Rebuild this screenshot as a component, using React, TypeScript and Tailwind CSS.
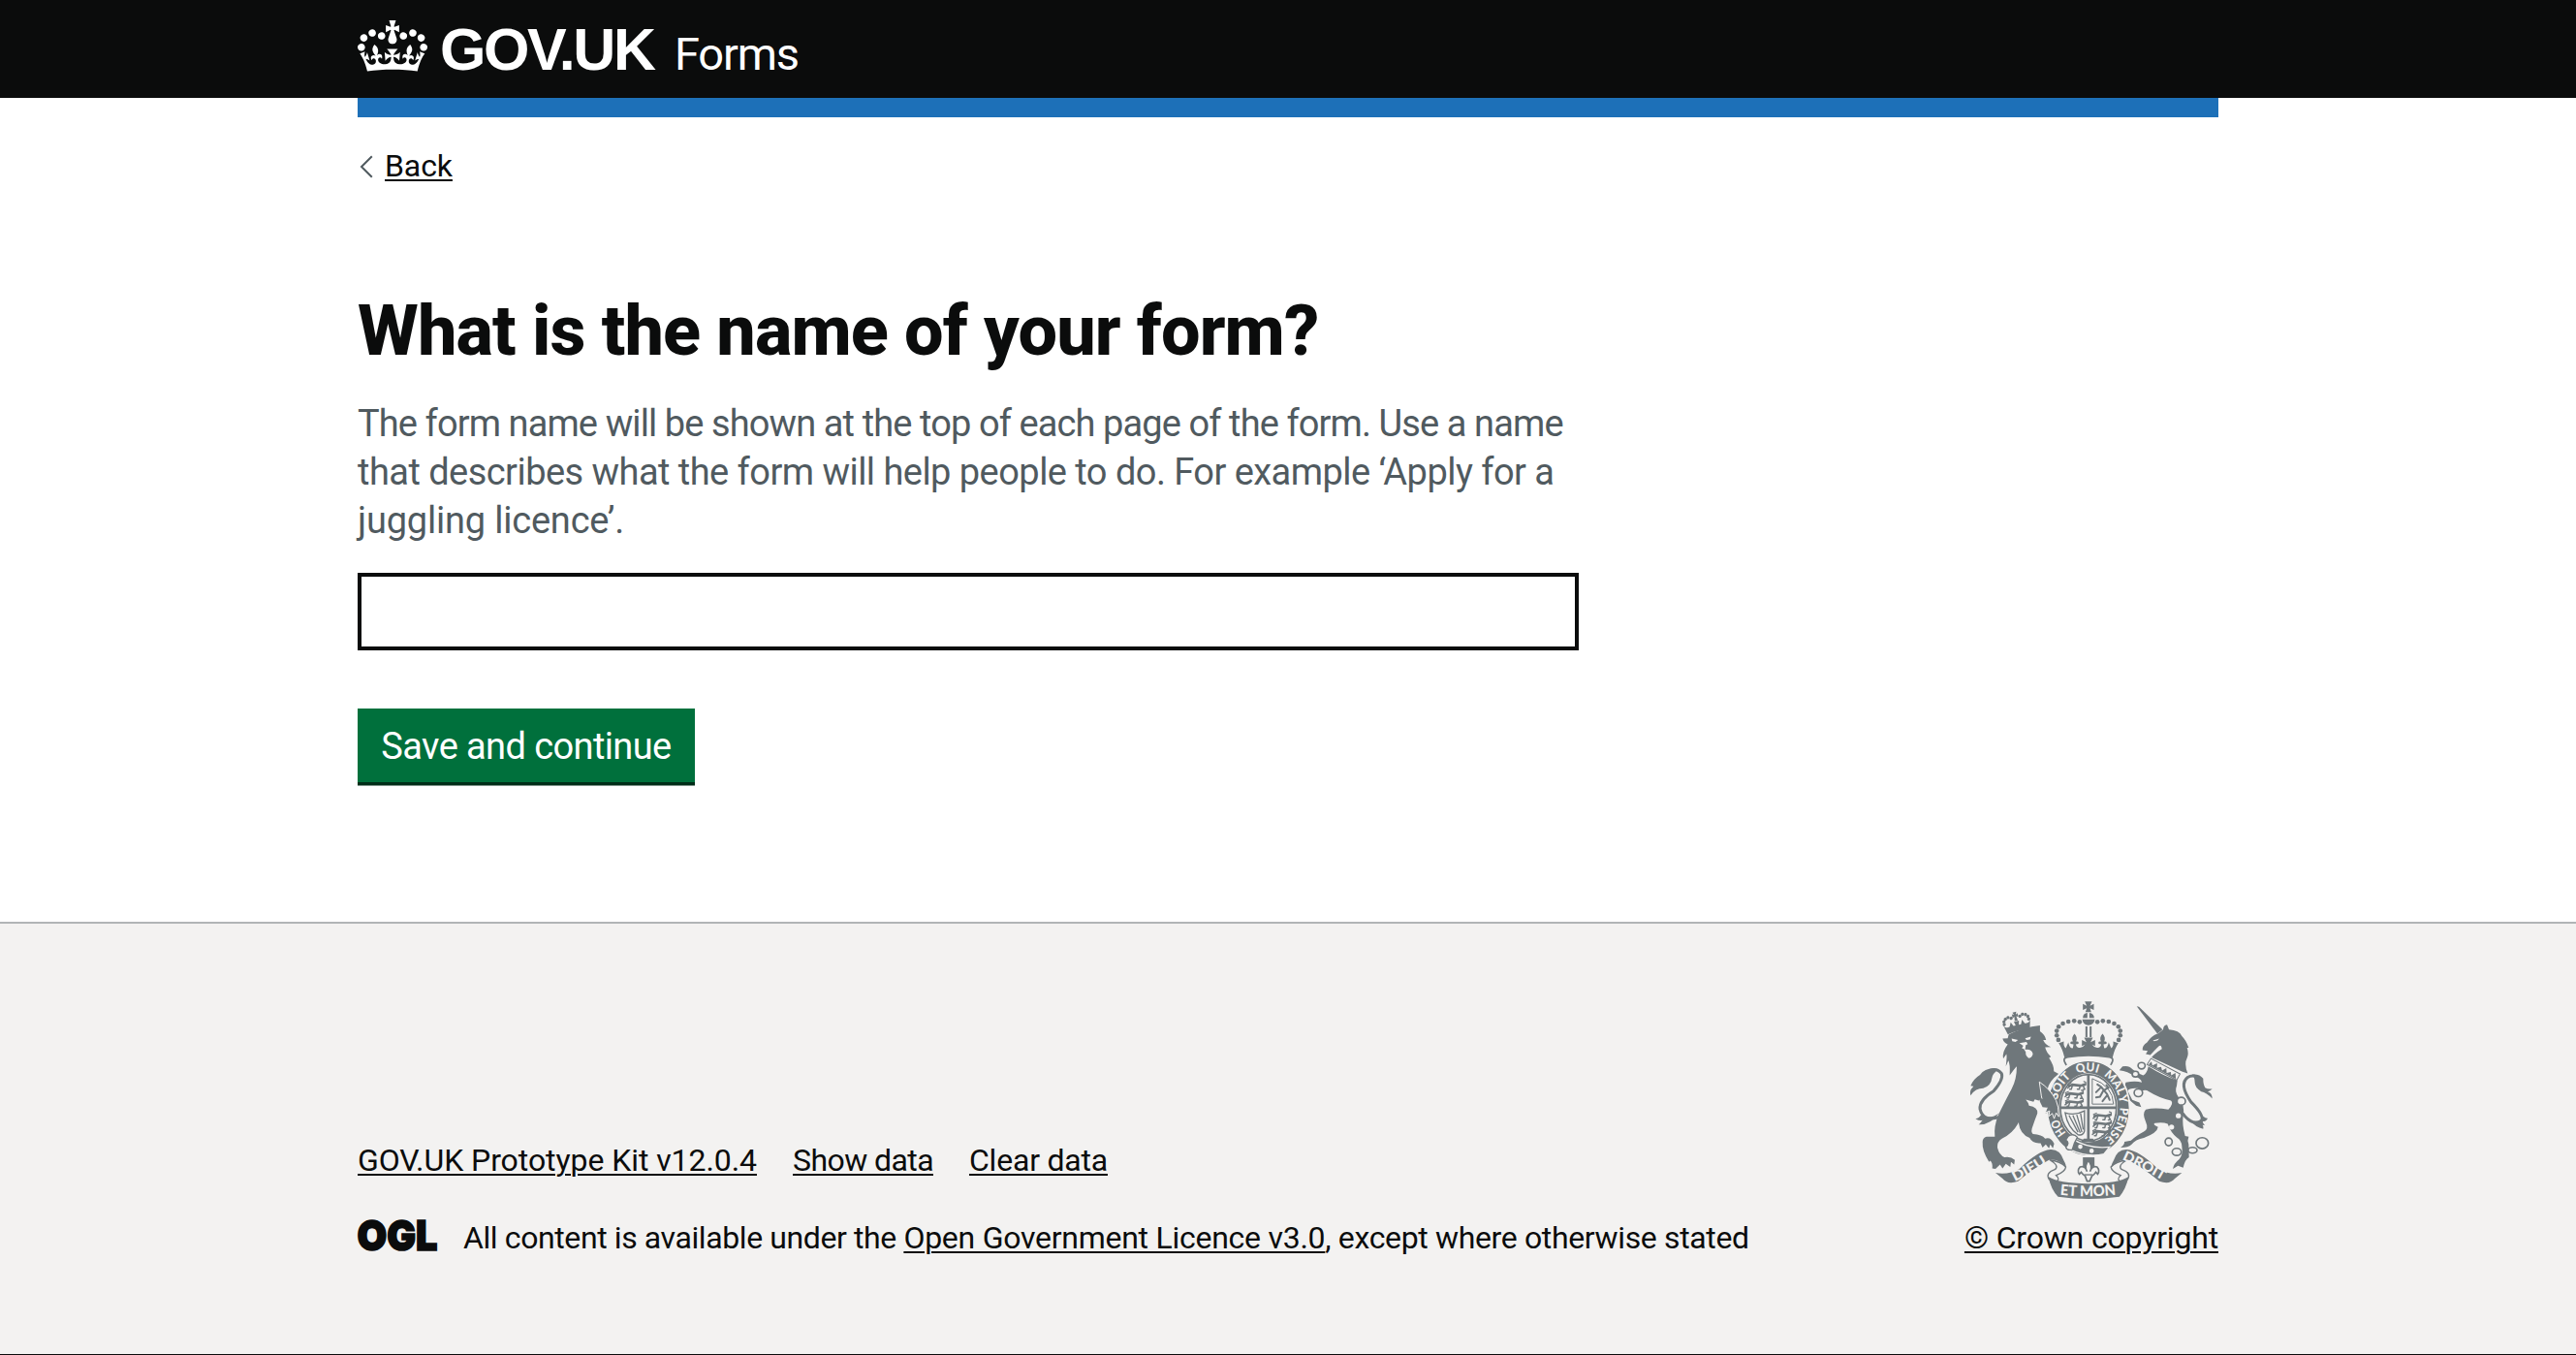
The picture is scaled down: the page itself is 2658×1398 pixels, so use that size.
import React from "react";

const PEARLS: [number, number][] = [
  [407, 102], [390, 99], [372, 101], [355, 107], [342, 117], [336, 130], [336, 144], [341, 158],
];

const CHAIN: [number, number, number, number][] = [
  [599, 238, 9, 10], [580, 264, 8, 9], [589, 322, 11, 12], [722, 348, 11, 12],
  [683, 474, 9, 12], [708, 505, 12, 11], [757, 500, 12, 9], [787, 478, 17, 17],
];

function CrownLogo() {
  return (
    <svg viewBox="0 0 132 97" className="h-[53px] w-[72px]" fill="currentColor" aria-hidden="true">
      <path
        fillRule="evenodd"
        d="M25 30.2c3.5 1.5 7.7-.2 9.1-3.7 1.5-3.6-.2-7.8-3.9-9.2-3.6-1.4-7.6.3-9.1 3.9-1.4 3.5.3 7.5 3.9 9zM9 39.5c3.6 1.5 7.8-.2 9.2-3.7 1.5-3.6-.2-7.8-3.9-9.1-3.6-1.5-7.6.2-9.1 3.8-1.4 3.5.3 7.5 3.8 9zM4.4 57.2c3.5 1.5 7.7-.2 9.1-3.8 1.5-3.6-.2-7.7-3.9-9.1-3.5-1.5-7.6.3-9.1 3.8-1.4 3.5.3 7.6 3.9 9.1zm38.3-21.4c3.5 1.5 7.7-.2 9.1-3.8 1.5-3.6-.2-7.7-3.9-9.1-3.6-1.5-7.6.3-9.1 3.8-1.3 3.6.4 7.7 3.9 9.1zm64.4-5.6c-3.6 1.5-7.8-.2-9.1-3.7-1.5-3.6.2-7.8 3.8-9.2 3.6-1.4 7.7.3 9.2 3.9 1.3 3.5-.4 7.5-3.9 9zm15.9 9.3c-3.6 1.5-7.7-.2-9.1-3.7-1.5-3.6.2-7.8 3.7-9.1 3.6-1.5 7.7.2 9.2 3.8 1.5 3.5-.3 7.5-3.8 9zm4.7 17.7c-3.6 1.5-7.8-.2-9.2-3.8-1.5-3.6.2-7.7 3.9-9.1 3.6-1.5 7.7.3 9.2 3.8 1.3 3.5-.4 7.6-3.9 9.1zM89.3 35.8c-3.6 1.5-7.8-.2-9.2-3.8-1.4-3.6.2-7.7 3.9-9.1 3.6-1.5 7.7.3 9.2 3.8 1.4 3.6-.3 7.7-3.9 9.1zM69.7 17.7l8.9 4.7V9.3l-8.9 2.8c-.2-.3-.5-.6-.9-.9L72.4 0H59.6l3.5 11.2c-.3.3-.6.5-.9.9l-8.8-2.8v13.1l8.8-4.7c.3.3.6.7.9.9l-5 15.4v.1c-.2.8-.4 1.6-.4 2.4 0 4.1 3.1 7.5 7 8.1h.2c.3 0 .7.1 1 .1.4 0 .7 0 1-.1h.2c4-.6 7.1-4.1 7.1-8.1 0-.8-.1-1.7-.4-2.4V34l-5.1-15.4c.4-.2.7-.6 1-.9zM66 92.8c16.9 0 32.8 1.1 47.1 3.2 4-16.9 8.9-26.7 14-33.5l-9.6-3.4c1 4.9 1.1 7.2 0 10.2-1.5-1.4-3-4.3-4.2-8.7L108.6 76c2.8-2 5-3.2 7.5-3.3-4.4 9.4-10 11.9-13.6 11.2-4.3-.8-6.3-4.6-5.6-7.9 1-4.7 5.7-5.9 8-.5 4.3-8.7-3-11.4-7.6-8.8 7.1-7.2 7.9-13.5 2.1-21.1-8 6.1-8.1 12.3-4.5 20.8-4.7-5.4-12.1-2.5-9.5 6.2 3.4-5.2 7.9-2 7.2 3.1-.6 4.3-6.4 7.8-13.5 7.2-10.3-.9-10.9-8-11.2-13.8 2.5-.5 7.1 1.8 11 7.3L80.2 60c-4.1 4.4-8 5.3-12.3 5.4 1.4-4.4 8-11.6 8-11.6H55.5s6.4 7.2 7.9 11.6c-4.2-.1-8-1-12.3-5.4l1.4 16.4c3.9-5.5 8.5-7.7 10.9-7.3-.3 5.8-.9 12.8-11.1 13.8-7.2.6-12.9-2.9-13.5-7.2-.7-5 3.8-8.3 7.1-3.1 2.7-8.7-4.6-11.6-9.4-6.2 3.7-8.5 3.6-14.7-4.6-20.8-5.8 7.6-5 13.9 2.2 21.1-4.7-2.6-11.9.1-7.7 8.8 2.3-5.5 7.1-4.2 8.1.5.7 3.3-1.3 7.1-5.7 7.9-3.5.7-9-1.8-13.5-11.2 2.5.1 4.7 1.3 7.5 3.3l-4.7-15.4c-1.2 4.4-2.7 7.2-4.3 8.7-1.1-3-.9-5.3 0-10.2l-9.5 3.4c5 6.9 9.9 16.7 14 33.5 14.8-2.1 30.8-3.2 47.7-3.2z"
      />
    </svg>
  );
}

/** A small walking lion, used in the quarters of the shield. */
function PassantLion({ x, y }: { x: number; y: number }) {
  return (
    <g transform={`translate(${x} ${y})`} fill="none" stroke="#6f777b" strokeWidth="4.5" strokeLinecap="round" strokeLinejoin="round">
      <path d="M6 8 L16 5 L42 8 L56 4" strokeWidth="8" />
      <path d="M8 10 L2 15 M16 9 L13 19 L8 19 M40 10 L38 19 L32 19 M50 9 L55 19 L49 20" />
      <path d="M56 3 Q62 -4 52 -5 M3 3 L12 -1" strokeWidth="3.5" />
    </g>
  );
}

function Crest() {
  return (
    <svg viewBox="68.5 38 750 613" className="h-[204px] w-[250px]" aria-hidden="true">
      <defs>
        <path id="garter" d="M434 479 A98 114 0 0 1 336 368 A98 113 0 0 1 532 368 A98 114 0 0 1 434 479" />
        <path id="dieu" d="M206 597 Q266 568 322 528" />
        <path id="droit" d="M538 528 Q605 558 670 597" />
        <path id="etmon" d="M346 638 Q434 648 524 637" />
      </defs>

      <g fill="#6f777b">
        {/* Royal crown */}
        <path d="M423 39 H445 L439 52 L451 46 V65 L439 60 L443 72 H425 L429 60 L417 65 V46 L429 52Z" />
        <path d="M417 90 Q417 75 431 74 V90Z M437 74 Q452 76 452 90 H437Z M415 94 H454 Q452 111 434 112 Q417 111 415 94Z" />
        <path d="M425 116 H431 V149 H425Z M438 116 H444 V149 H438Z" />
        {PEARLS.map(([x, y]) => (
          <React.Fragment key={`${x}-${y}`}>
            <circle cx={x} cy={y} r="7" />
            <circle cx={869 - x} cy={y} r="7" />
          </React.Fragment>
        ))}
        <path d="M342 168 L358 163 Q356 178 364 184 L372 166 Q376 186 386 183 L388 172 L379 170 Q376 161 386 163 Q380 151 391 139 Q402 151 396 163 Q406 161 403 170 L395 172 Q398 184 408 182 Q420 180 424 172 L414 177 V158 L428 165 L421 151 H448 L441 165 L455 158 V177 L445 172 Q449 180 461 182 Q471 184 474 172 L466 170 Q463 161 473 163 Q467 151 478 139 Q489 151 483 163 Q493 161 490 170 L481 172 L483 183 Q493 186 497 166 L505 184 Q513 178 511 163 L527 168 Q516 184 509 212 Q434 200 360 212 Q353 184 342 168Z" />
      </g>
      <path d="M366 236 Q350 214 370 211 Q434 201 499 211 Q518 214 503 236" fill="#f3f2f1" stroke="#6f777b" strokeWidth="5" />

      {/* Tails */}
      <g fill="none" stroke="#6f777b" strokeWidth="9">
        <path d="M170 392 Q108 418 98 372 Q96 344 140 317 Q172 280 165 262 Q152 244 130 252" />
        <path d="M716 370 Q752 430 785 408 Q794 392 752 350 Q714 295 742 274 Q752 267 765 270" />
      </g>
      <g fill="#6f777b">
        <path d="M140 246 Q112 246 98 266 Q78 278 69 300 L78 302 Q64 315 69 330 Q84 308 108 308 Q132 300 135 276 Q138 262 148 256Z" />
        <path d="M101 390 Q96 400 84 402 Q96 410 106 407 Q98 418 94 420 Q130 422 158 384 Q130 406 101 390Z" />
        <path d="M756 265 Q778 262 790 278 Q790 298 796 306 Q806 312 818 309 Q812 318 804 318 Q818 322 818 340 Q800 320 784 318 Q764 306 764 290 Q764 274 756 265Z" />
        <path d="M790 395 Q798 402 804 401 Q800 412 788 410 Q790 420 795 423 L788 422 Q792 428 790 434 Q766 428 750 408 Q772 422 790 395Z" />
      </g>

      {/* Lion */}
      <path
        fill="#6f777b"
        d="M168 154 L184 153 L187 141 Q232 118 284 113 L284 131 Q300 142 303 158 L294 158 Q300 174 318 180 L300 181 Q304 198 318 210 L312 214 Q328 238 327 255 L342 263 Q312 285 307 312 L330 346 Q342 366 340 392 L334 382 L330 400 L323 386 L312 395 L315 380 L301 386 L308 370 L297 362 L304 350 L294 352 L290 338 L280 346 L268 342 L264 350 L240 343 Q248 352 250 362 Q278 366 276 386 Q268 406 262 424 Q254 442 262 450 Q290 452 300 464 Q318 458 328 480 L324 494 L316 482 L312 494 L302 482 L292 492 L286 478 Q260 480 252 462 Q222 450 218 416 Q220 410 214 420 Q200 446 166 464 Q150 474 152 492 Q158 516 174 522 Q192 518 206 530 L204 544 L194 536 L192 552 L178 542 L168 556 L160 544 L146 558 L136 556 Q138 540 130 532 L126 536 Q104 502 106 474 Q106 462 118 458 L144 458 Q140 426 156 388 Q180 340 196 310 Q212 280 212 240 Q204 248 190 268 Q192 232 186 222 L178 240 Q182 212 180 202 L170 216 Q166 196 184 172 Q172 168 168 154Z"
      />
      <path d="M196 154 L216 158 L208 164 L198 162Z M238 153 L256 148 L253 157 L242 158Z M220 168 L242 164 L246 171 L240 174 L238 188 Q260 186 262 202 Q258 216 248 214 Q238 206 240 196 L234 186 L228 184 L232 176Z" fill="#f3f2f1" />
      {/* Lion's small crown */}
      <g fill="#6f777b" transform="rotate(-13 212 105)">
        <path d="M170 107 Q178 116 188 112 L194 99 L200 112 L207 112 L204 100 H220 L217 112 L224 112 L230 99 L236 112 Q246 116 254 107 L247 134 Q212 126 177 134Z" />
        <path d="M206 71 H218 L215 79 L221 76 V88 L215 85 L217 98 H207 L209 85 L203 88 V76 L209 79Z" />
        {[[173, 102], [174, 93], [180, 86], [189, 83], [198, 87], [251, 102], [250, 93], [244, 86], [235, 83], [226, 87]].map(([x, y]) => (
          <circle key={x * 1000 + y} cx={x} cy={y} r="5" />
        ))}
      </g>

      {/* Unicorn */}
      <g fill="#6f777b">
        <path d="M584 54 L591 55 L664 126 L648 139Z" />
        <path d="M650 138 L666 126 Q666 112 678 111 L684 126 Q716 128 724 146 Q738 160 745 182 L740 182 Q746 200 740 214 Q730 232 742 262 L724 256 L630 212 Q640 200 662 186 Q660 170 652 178 Q640 190 626 205 L612 202 L618 192 L602 190 Q600 176 616 166 Q628 146 650 138Z" />
        <path d="M620 240 Q664 268 710 284 L708 300 Q700 318 714 336 Q734 360 728 392 Q724 420 734 456 L745 458 Q740 470 745 482 L746 522 Q734 528 728 554 L712 548 L696 558 Q698 542 716 528 Q728 514 724 488 Q724 470 708 460 Q690 446 680 418 Q664 412 640 416 Q632 420 650 428 Q648 446 606 462 Q582 466 568 482 Q558 492 534 492 Q546 484 546 474 L566 470 Q580 456 606 442 Q622 434 612 412 Q600 386 612 374 Q640 366 682 374 Q700 354 690 346 Q650 336 622 318 Q608 310 600 318 L588 308 Q560 306 556 316 L570 344 L592 352 L598 366 L582 362 L566 348 Q548 330 544 308 L550 290 Q580 284 600 290 Q596 276 578 272 Q556 254 530 252 L540 240 Q560 236 570 248 Q586 262 604 268 Q616 262 620 240Z" />
      </g>
      <path d="M634 160 L654 154 L648 160 L638 162Z" fill="#f3f2f1" />
      <g transform="translate(630 212) rotate(28)">
        <path d="M0 4 H102 V26 H-2Z" fill="#f3f2f1" stroke="#6f777b" strokeWidth="3" />
        <path d="M2 24 L6 12 L14 21 L24 8 L30 21 L40 12 L48 21 L56 8 L64 21 L74 12 L80 21 L88 8 L98 24Z" fill="#6f777b" />
      </g>
      {CHAIN.map(([x, y, rx, ry]) => (
        <ellipse key={x} cx={x} cy={y} rx={rx + 2} ry={ry} fill={x < 680 || x === 722 ? "#f3f2f1" : "none"} stroke="#6f777b" strokeWidth="5" />
      ))}
      <circle cx="713" cy="393" r="8" fill="#f3f2f1" />
      <circle cx="692" cy="428" r="8" fill="#f3f2f1" />

      {/* Garter */}
      <ellipse cx="434" cy="370" rx="128" ry="148" fill="#6f777b" stroke="#f3f2f1" strokeWidth="5" />
      <ellipse cx="434" cy="368" rx="91" ry="107" fill="#f3f2f1" />
      <ellipse cx="434" cy="368" rx="87" ry="103" fill="none" stroke="#6f777b" strokeWidth="5" />
      <path d="M434 264 V471 M346 368 H522" stroke="#6f777b" strokeWidth="8" />
      <g fontFamily="Lato, Liberation Sans, sans-serif" fontWeight="900" fontSize="37" fill="#f3f2f1">
        <text><textPath href="#garter" startOffset="12%" textLength="50" lengthAdjust="spacingAndGlyphs">HO</textPath></text>
        <text><textPath href="#garter" startOffset="28.5%" textLength="84" lengthAdjust="spacingAndGlyphs">SOIT</textPath></text>
        <text><textPath href="#garter" startOffset="44.5%" textLength="66" lengthAdjust="spacingAndGlyphs">QUI</textPath></text>
        <text><textPath href="#garter" startOffset="57.5%" textLength="78" lengthAdjust="spacingAndGlyphs">MAL</textPath></text>
        <text><textPath href="#garter" startOffset="69.5%">Y</textPath></text>
        <text><textPath href="#garter" startOffset="75%" textLength="112" lengthAdjust="spacingAndGlyphs">PENSE</textPath></text>
      </g>

      {/* Shield quarters */}
      <PassantLion x={368} y={292} />
      <PassantLion x={360} y={319} />
      <PassantLion x={360} y={344} />
      <PassantLion x={447} y={386} />
      <PassantLion x={447} y={411} />
      <PassantLion x={445} y={436} />
      <path d="M446 278 V357 H512 Q510 300 446 278" fill="none" stroke="#6f777b" strokeWidth="3" />
      <path d="M462 296 L474 304 L492 326 L500 344 M470 308 L458 320 M480 316 L470 334 L458 336 M492 330 L478 348 M486 312 L496 306 L490 298" fill="none" stroke="#6f777b" strokeWidth="6" strokeLinecap="round" />
      <path d="M362 384 Q392 394 422 378 V440 Q418 456 402 452 Q370 430 362 384Z M374 392 L402 444 M386 392 L409 446 M398 390 L414 444 M410 386 L418 436" fill="none" stroke="#6f777b" strokeWidth="4" />

      {/* Lion's paw over the garter */}
      <path d="M282 288 Q318 312 334 346 L340 366 L342 396 L334 384 L328 402 L322 386 L311 395 L314 378 L300 384 L306 368 L294 360 L288 330Z" fill="#6f777b" stroke="#f3f2f1" strokeWidth="3" />
      <path d="M280 334 L300 346 L306 368 L292 366 L284 350Z" fill="#6f777b" />

      {/* Garter buckle and strap */}
      <path d="M380 462 Q436 498 500 490 L482 512 Q430 524 372 496Z" fill="#6f777b" stroke="#f3f2f1" strokeWidth="4" />
      <path d="M372 456 Q388 446 400 460 Q390 476 384 498 Q368 502 364 490 Q378 478 364 468Z" fill="#f3f2f1" stroke="#6f777b" strokeWidth="4" />
      <circle cx="409" cy="489" r="7" fill="#f3f2f1" />
      <circle cx="444" cy="502" r="7" fill="#f3f2f1" />
      <path d="M420 464 H448 L456 474 H412Z" fill="#6f777b" />

      {/* Fleur-de-lis */}
      <path d="M417 522 H453 V552 H417Z" fill="#6f777b" />
      <path d="M434 532 Q420 548 430 566 Q424 546 408 552 Q398 562 406 574 L412 568 Q418 576 424 580 L430 596 L438 596 L445 580 Q452 576 457 568 L463 574 Q471 562 461 552 Q446 546 439 566 Q449 548 434 532Z" fill="#f3f2f1" stroke="#6f777b" strokeWidth="5" />
      <path d="M422 576 H447" stroke="#6f777b" strokeWidth="4" />

      {/* Motto ribbon */}
      <g fill="#f3f2f1" stroke="#6f777b" strokeWidth="4">
        <path d="M314 530 Q348 534 364 552 Q362 566 334 578 Q350 590 330 600 L312 590 Q300 570 330 560 Q346 548 314 530Z" />
        <path d="M554 530 Q520 534 504 552 Q506 566 534 578 Q518 590 538 600 L556 590 Q568 570 538 560 Q522 548 554 530Z" />
      </g>
      <g fill="#6f777b">
        <path d="M146 570 Q186 578 222 556 Q278 502 316 498 Q346 496 358 532 Q366 546 364 552 Q340 524 312 530 Q264 556 216 596 Q184 608 168 588Z" />
        <path d="M724 570 Q684 578 648 556 Q592 502 554 498 Q524 496 512 532 Q504 546 506 552 Q530 524 558 530 Q606 556 654 596 Q686 608 702 588Z" />
        <path d="M310 582 Q340 602 434 604 Q530 602 559 582 Q550 622 530 644 Q434 658 340 644 Q318 622 310 582Z" />
      </g>
      <g fontFamily="Lato, Liberation Sans, sans-serif" fontWeight="900" fontSize="42" fill="#f3f2f1">
        <text><textPath href="#dieu" textLength="116" lengthAdjust="spacingAndGlyphs">DIEU</textPath></text>
        <text><textPath href="#droit" textLength="142" lengthAdjust="spacingAndGlyphs">DROIT</textPath></text>
        <text fontSize="46"><textPath href="#etmon" textLength="174" lengthAdjust="spacingAndGlyphs">ET MON</textPath></text>
      </g>
    </svg>
  );
}

function OglLogo() {
  return (
    <svg viewBox="0 0 82 40" className="-mt-[3px] h-[40px] w-[82px] shrink-0 overflow-visible" aria-hidden="true">
      <text
        x="-0.5"
        y="35.5"
        textLength="83"
        lengthAdjust="spacingAndGlyphs"
        fontFamily="Inter, sans-serif"
        fontWeight="900"
        fontSize="43"
        fill="#0b0c0c"
        stroke="#0b0c0c"
        strokeWidth="1.6"
      >
        OGL
      </text>
    </svg>
  );
}

const link = "underline decoration-2 underline-offset-[3px]";

export default function App() {
  return (
    <div className="flex h-[1398px] flex-col bg-white font-[Roboto,sans-serif] text-[32px] leading-[40px] text-[#0b0c0c]">
      <header className="h-[101px] bg-[#0b0c0c] text-white">
        <div className="mx-auto flex h-full w-[1920px] items-start">
          <div className="mt-[21px]">
            <CrownLogo />
          </div>
          <span className="mt-[15px] ml-[13px] w-[242px] font-['Liberation_Sans',sans-serif] text-[61px] leading-[72px] font-bold tracking-[-2.4px]">
            GOV.UK
          </span>
          <span className="mt-[28px] text-[47px] leading-[56px] tracking-[-1.2px]">Forms</span>
        </div>
      </header>

      <div className="mx-auto w-[1920px]">
        <div className="h-[20px] bg-[#1d70b8]" />
        <a className="mt-[30px] flex items-center">
          <svg viewBox="0 0 14 24" className="mt-[1px] ml-[2px] h-[24px] w-[14px]" fill="none" stroke="#505a5f" strokeWidth="2">
            <path d="M12.8 1.2 L2 12 L12.8 22.8" />
          </svg>
          <span className={`ml-[12px] ${link} tracking-[-0.1px]`}>Back</span>
        </a>

        <main className="mt-[111px] flex w-[1260px] flex-col items-start">
          <h1 className="text-[72px] leading-[80px] font-extrabold tracking-[-0.85px] whitespace-nowrap">
            What is the name of your form?
          </h1>
          <p className="mt-[30px] text-[38px] leading-[50px] whitespace-nowrap text-[#505a5f]">
            <span className="block tracking-[-0.9px]">
              The form name will be shown at the top of each page of the form. Use a name
            </span>
            <span className="block tracking-[-0.54px]">
              that describes what the form will help people to do. For example ‘Apply for a
            </span>
            <span className="block tracking-[-0.2px]">juggling licence’.</span>
          </p>
          <input
            aria-label="Form name"
            className="mt-[29px] h-[80px] w-full border-4 border-[#0b0c0c] bg-white px-2 outline-none"
          />
          <button className="mt-[60px] h-[76px] w-[348px] bg-[#00703c] pt-[2px] text-[38px] leading-[50px] tracking-[-0.6px] text-white shadow-[0_3.5px_0_#002d18]">
            Save and continue
          </button>
        </main>
      </div>

      <footer className="mt-[144px] flex-1 border-t-2 border-b border-t-[#b1b4b6] border-b-[#0b0c0c] bg-[#f3f2f1]">
        <div className="mx-auto flex w-[1920px] items-end justify-between pt-[80px] whitespace-nowrap">
          <div>
            <nav className="flex gap-[37px]">
              <a className={`${link} tracking-[-0.07px]`}>GOV.UK Prototype Kit v12.0.4</a>
              <a className={`${link} tracking-[-0.58px]`}>Show data</a>
              <a className={`${link} tracking-[-0.21px]`}>Clear data</a>
            </nav>
            <div className="mt-[40px] flex items-start">
              <OglLogo />
              <p className="ml-[27px] tracking-[-0.4px]">
                All content is available under the <a className={`${link} tracking-[-0.26px]`}>Open Government Licence v3.0</a>
                <span className="tracking-[-0.36px]">, except where otherwise stated</span>
              </p>
            </div>
          </div>
          <div className="flex flex-col items-end">
            <div className="mr-[6px]">
              <Crest />
            </div>
            <a className={`mt-[20px] ${link} tracking-[-0.17px]`}>© Crown copyright</a>
          </div>
        </div>
      </footer>
    </div>
  );
}
